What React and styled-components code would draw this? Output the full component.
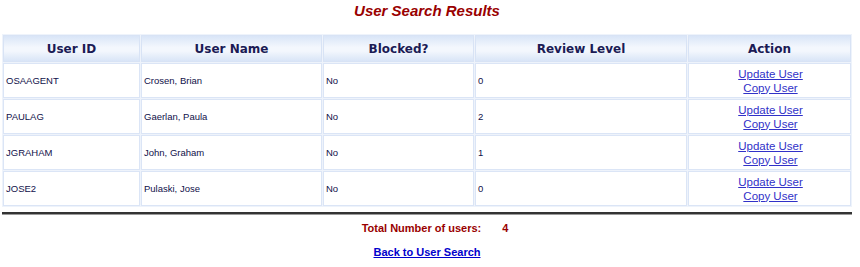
import React from "react";
import styled, { createGlobalStyle } from "styled-components";

const GlobalStyle = createGlobalStyle`
    body {
        margin: 0;
        background: #ffffff;
        font-family: "Liberation Sans", Arial, sans-serif;
    }
`;

const Page = styled.div`
    width: 850px;
    padding: 0 2px;
    box-sizing: content-box;
`;

const Title = styled.h1`
    margin: 0;
    padding-top: 2px;
    height: 34px;
    box-sizing: border-box;
    text-align: center;
    font-size: 15px;
    font-weight: bold;
    font-style: italic;
    color: #990000;
`;

const ResultsTable = styled.table`
    width: 850px;
    table-layout: fixed;
    border-collapse: separate;
    border-spacing: 1px;
    background: #eef3fb;
    border: 0;
`;

const HeadCell = styled.th`
    height: 25px;
    padding: 0;
    border: 1px solid #d8e3f5;
    background: linear-gradient(180deg, #d9e5f7 0%, #f3f7fd 45%, #f3f7fd 60%, #d9e5f7 100%);
    font-family: "DejaVu Sans", Verdana, sans-serif;
    font-size: 12px;
    font-weight: bold;
    color: #1b1b55;
    text-align: center;
`;

const Cell = styled.td`
    height: 33px;
    padding: 0 0 0 2px;
    border: 1px solid #dbe5f6;
    background: #ffffff;
    font-size: 9.5px;
    color: #10104a;
    text-align: ${p => (p.center ? "center" : "left")};
    vertical-align: middle;
`;

const ActionLink = styled.a`
    display: block;
    font-size: 11.5px;
    line-height: 14px;
    color: #3131c8;
    text-decoration: underline;
`;

const Rule = styled.hr`
    margin: 5px 0 0;
    border: 0;
    border-top: 2px solid #333333;
    border-bottom: 1px solid #9a9a9a;
    width: 850px;
`;

const Summary = styled.div`
    display: flex;
    justify-content: center;
    gap: 21px;
    margin-top: 7px;
    padding-left: 16px;
    font-size: 11px;
    font-weight: bold;
    color: #990000;
`;

const BackLink = styled.a`
    display: block;
    margin-top: 12px;
    text-align: center;
    font-size: 11px;
    font-weight: bold;
    color: #0000cc;
    text-decoration: underline;
`;

const columns = [
    { label: "User ID", width: 137 },
    { label: "User Name", width: 181 },
    { label: "Blocked?", width: 151 },
    { label: "Review Level", width: 212 },
    { label: "Action", width: 163 },
];

const users = [
    { id: "OSAAGENT", name: "Crosen, Brian", blocked: "No", level: 0 },
    { id: "PAULAG", name: "Gaerlan, Paula", blocked: "No", level: 2 },
    { id: "JGRAHAM", name: "John, Graham", blocked: "No", level: 1 },
    { id: "JOSE2", name: "Pulaski, Jose", blocked: "No", level: 0 },
];

function App() {
    return <Page>
        <GlobalStyle />
        <Title>User Search Results</Title>
        <ResultsTable>
            <colgroup>
                {columns.map(c => <col key={c.label} style={{ width: c.width }} />)}
            </colgroup>
            <thead>
                <tr>
                    {columns.map(c => <HeadCell key={c.label}>{c.label}</HeadCell>)}
                </tr>
            </thead>
            <tbody>
                {users.map(u => <tr key={u.id}>
                    <Cell>{u.id}</Cell>
                    <Cell>{u.name}</Cell>
                    <Cell>{u.blocked}</Cell>
                    <Cell>{u.level}</Cell>
                    <Cell center>
                        <ActionLink href="#">Update User</ActionLink>
                        <ActionLink href="#">Copy User</ActionLink>
                    </Cell>
                </tr>)}
            </tbody>
        </ResultsTable>
        <Rule />
        <Summary>
            <span>Total Number of users:</span>
            <span>{users.length}</span>
        </Summary>
        <BackLink href="#">Back to User Search</BackLink>
    </Page>;
}

export default App;
